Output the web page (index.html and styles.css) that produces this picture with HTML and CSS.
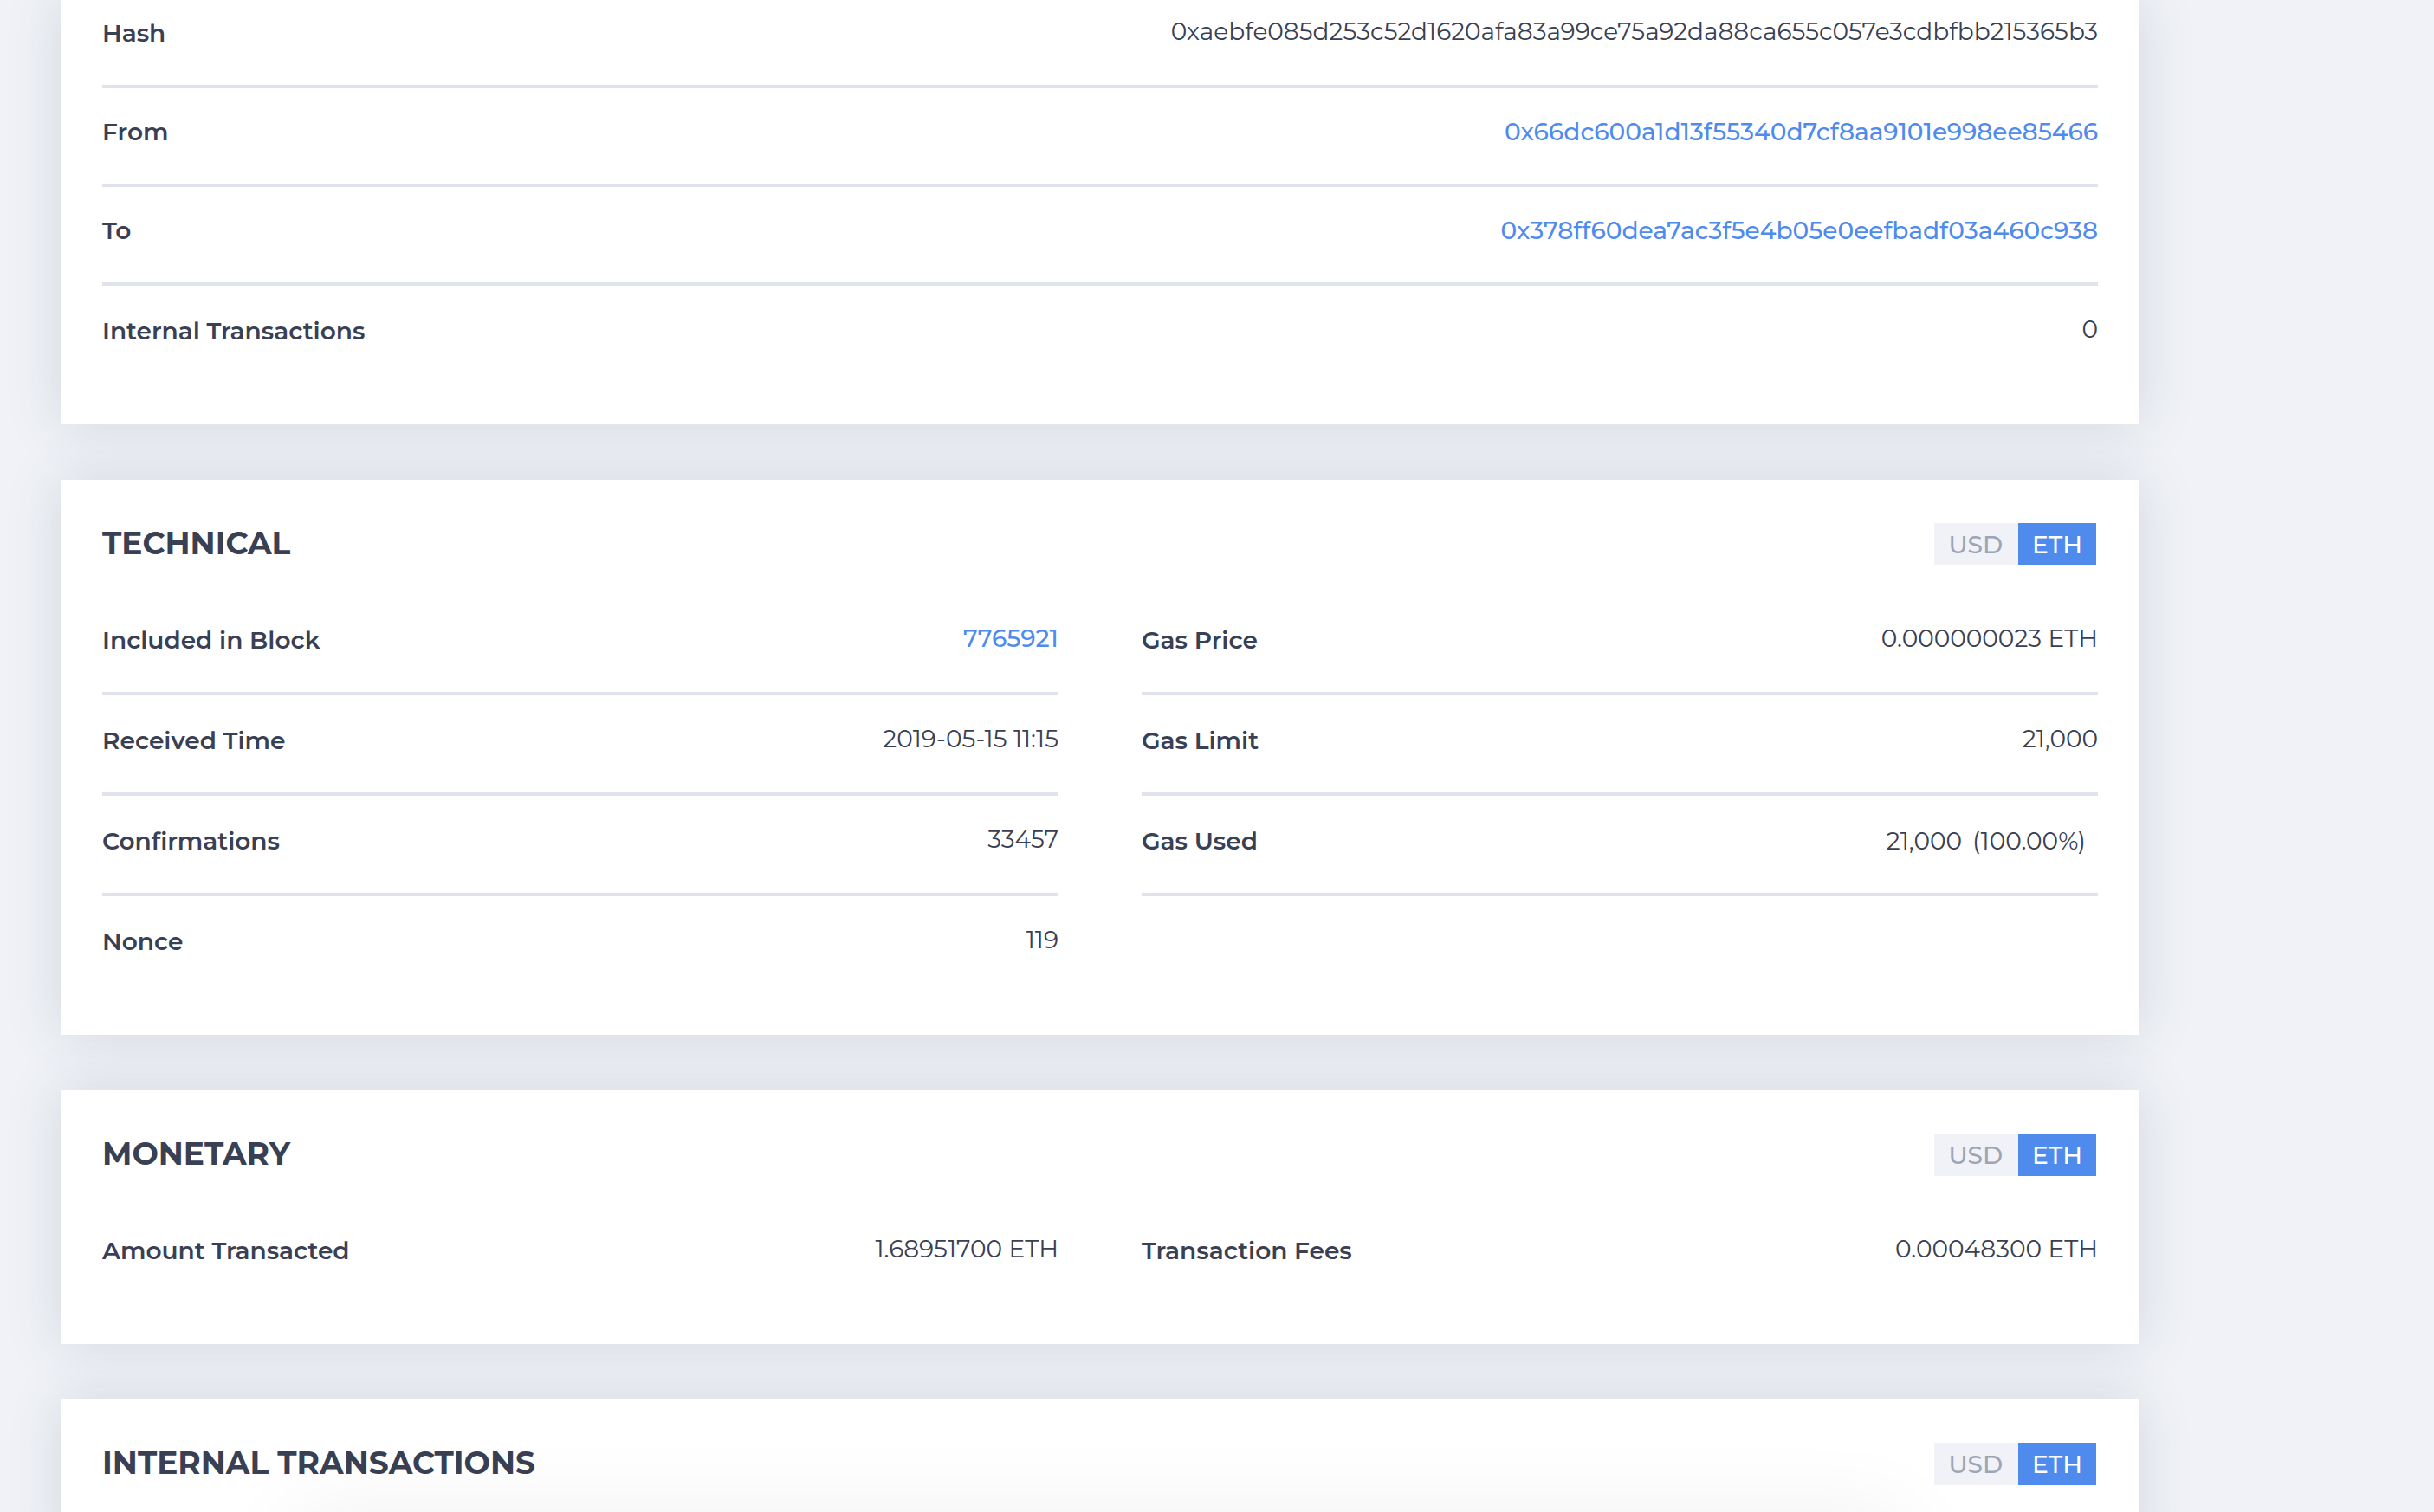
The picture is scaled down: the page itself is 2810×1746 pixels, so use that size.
FILE: index.html
```
<!DOCTYPE html>
<html lang="en">
<head>
<meta charset="utf-8">
<title>Transaction details</title>
<link rel="stylesheet" href="styles.css">
</head>
<body>
<main class="page">
  <section class="card card-overview">
    <dl class="rows rows-overview">
      <div class="row"><dt>Hash</dt><dd>0xaebfe085d253c52d1620afa83a99ce75a92da88ca655c057e3cdbfbb215365b3</dd></div>
      <div class="row row-address"><dt>From</dt><dd><a href="#from">0x66dc600a1d13f55340d7cf8aa9101e998ee85466</a></dd></div>
      <div class="row row-address"><dt>To</dt><dd><a href="#to">0x378ff60dea7ac3f5e4b05e0eefbadf03a460c938</a></dd></div>
      <div class="row"><dt>Internal Transactions</dt><dd>0</dd></div>
    </dl>
  </section>

  <section class="card">
    <header class="card-head">
      <h2>TECHNICAL</h2>
      <div class="toggle"><button type="button">USD</button><button type="button" class="on">ETH</button></div>
    </header>
    <div class="columns">
      <dl class="rows">
        <div class="row"><dt>Included in Block</dt><dd><a href="#block">7765921</a></dd></div>
        <div class="row"><dt>Received Time</dt><dd>2019-05-15 11:15</dd></div>
        <div class="row"><dt>Confirmations</dt><dd>33457</dd></div>
        <div class="row"><dt>Nonce</dt><dd>119</dd></div>
      </dl>
      <dl class="rows">
        <div class="row"><dt>Gas Price</dt><dd>0.000000023 ETH</dd></div>
        <div class="row"><dt>Gas Limit</dt><dd>21,000</dd></div>
        <div class="row ruled"><dt>Gas Used</dt><dd class="gas-used"><span>21,000</span><span>(100.00%)</span></dd></div>
      </dl>
    </div>
  </section>

  <section class="card">
    <header class="card-head">
      <h2>MONETARY</h2>
      <div class="toggle"><button type="button">USD</button><button type="button" class="on">ETH</button></div>
    </header>
    <div class="columns">
      <dl class="rows">
        <div class="row"><dt>Amount Transacted</dt><dd>1.68951700 ETH</dd></div>
      </dl>
      <dl class="rows">
        <div class="row"><dt>Transaction Fees</dt><dd>0.00048300 ETH</dd></div>
      </dl>
    </div>
  </section>

  <section class="card">
    <header class="card-head">
      <h2>INTERNAL TRANSACTIONS</h2>
      <div class="toggle"><button type="button">USD</button><button type="button" class="on">ETH</button></div>
    </header>
  </section>
</main>
<div class="drawer-shadow"></div>
</body>
</html>
```
FILE: styles.css
```
* { box-sizing: border-box; }

body {
  margin: 0;
  height: 100vh;
  overflow: hidden;
  background: #f0f2f7;
  color: #394053;
  font-family: Montserrat, Inter, sans-serif;
  font-size: 28px;
  line-height: 36px;
}

.page {
  display: flex;
  flex-direction: column;
  gap: 64px;
  margin: 0 340px 0 70px;
}

.card {
  padding: 50px 48px 44px;
  background: #fff;
  box-shadow: 0 0 60px rgba(64, 80, 96, 0.16);
}

.card-overview { padding-top: 0; }

.card-head {
  display: flex;
  justify-content: space-between;
  align-items: flex-start;
  height: 83px;
}

h2 {
  margin: 0;
  font-size: 36px;
  line-height: 46px;
  font-weight: 700;
}

.toggle {
  display: flex;
  margin-right: 2px;
}

.toggle button {
  height: 49px;
  padding: 0 18px 0 16px;
  border: 0;
  background: #f0f2f7;
  color: #9ca5b5;
  font: inherit;
  font-weight: 500;
}

.toggle .on {
  padding: 0 16px;
  background: #4f8bed;
  color: #fff;
}

.columns {
  display: grid;
  grid-template-columns: 1fr 1fr;
  gap: 96px;
}

.rows { margin: 0; }

.row {
  display: flex;
  justify-content: space-between;
  align-items: flex-start;
  height: 116px;
  padding-top: 32px;
  border-bottom: 4px solid #e0e3eb;
}

.rows-overview .row:first-child { height: 102px; padding-top: 18px; }
.row-address { height: 114px; padding-top: 30px; }
.row:last-child:not(.ruled) { border-bottom-color: transparent; }

dt {
  padding-top: 2px;
  font-weight: 600;
  font-variant-ligatures: none;
}

dd { margin: 0; }
.row-address dd, .gas-used { padding-top: 2px; }

.gas-used {
  display: flex;
  gap: 12px;
  margin-right: 14px;
}

a { color: #4f8bed; text-decoration: none; font-weight: 500; }

/* soft shadow of the panel docked under the fold */
.drawer-shadow {
  position: fixed;
  top: 100%;
  left: 340px;
  right: 610px;
  height: 200px;
  box-shadow: 0 0 100px rgba(0, 0, 0, 0.06);
}
```
